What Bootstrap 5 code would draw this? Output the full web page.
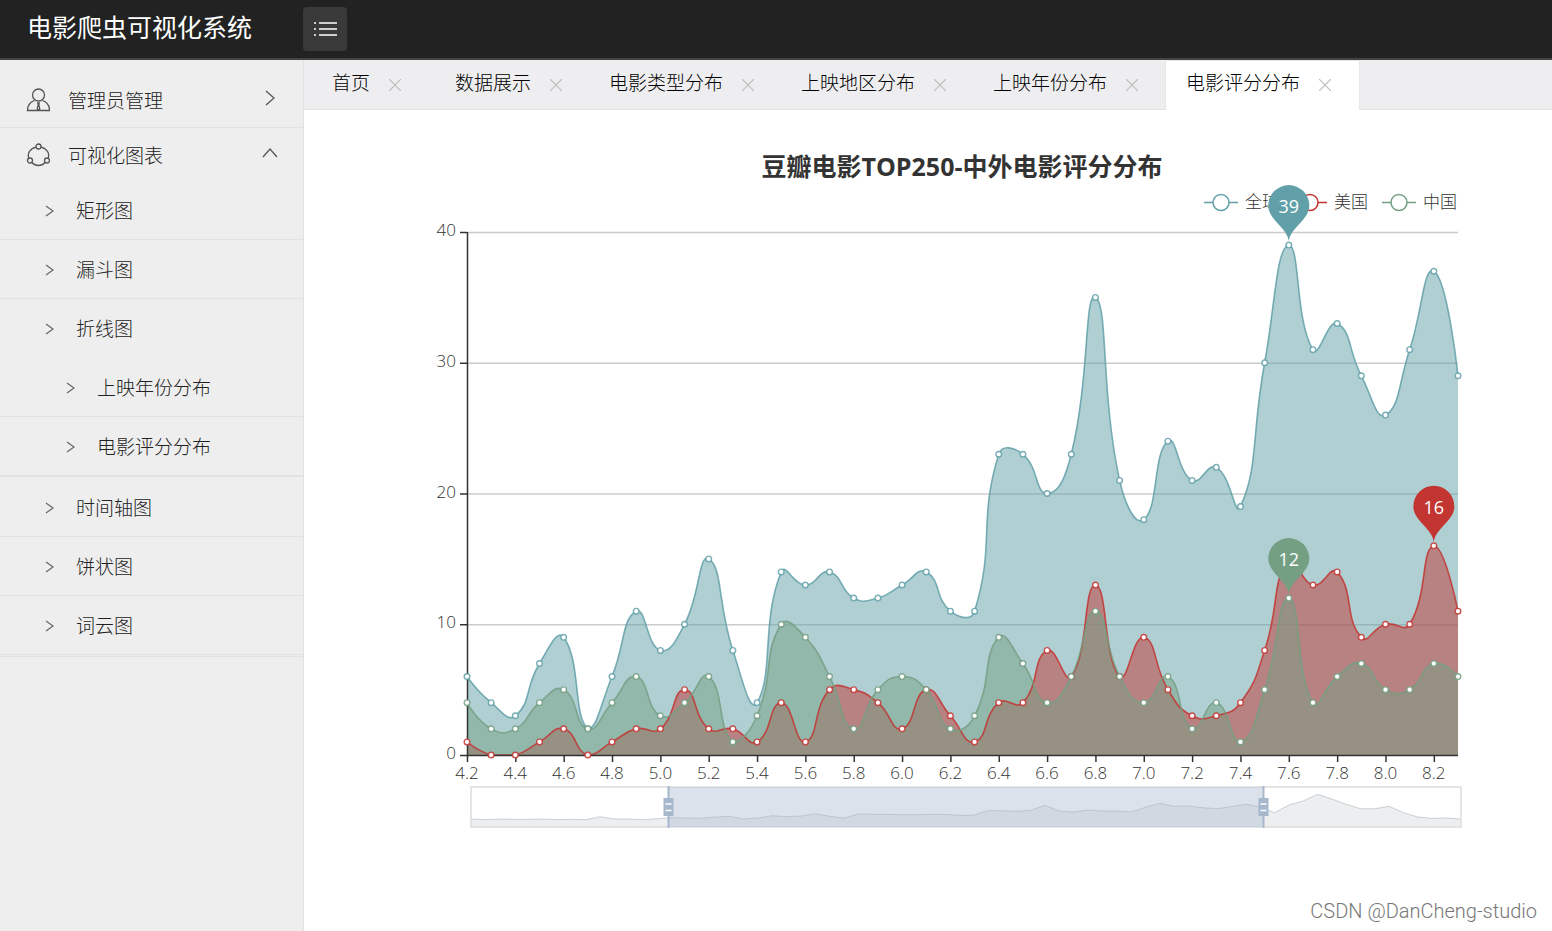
<!DOCTYPE html>
<html lang="zh-CN">
<head>
<meta charset="utf-8">
<meta name="viewport" content="width=device-width, initial-scale=1">
<title>电影爬虫可视化系统</title>
<link rel="stylesheet" href="https://cdn.jsdelivr.net/npm/bootstrap@5.3.0/dist/css/bootstrap.min.css">
<style>
  body { font-family: "Open Sans", "Noto Sans CJK SC", sans-serif; font-size: 19px; line-height: 28px; color: #222; background: #fff; }
  a { color: inherit; text-decoration: none; }
  .topbar { height: 60px; background: #222; border-bottom: 2px solid #444; padding-left: 27px; }
  .brand { width: 276px; font-size: 25px; font-weight: 400; color: #fff; padding-bottom: 5px; }
  .toggle { width: 44px; height: 44px; background: #393939; border-radius: 4px; border: 0; }
  .side { width: 304px; background: #eee; border-right: 1px solid #e2e2e2; font-weight: 300; }
  .menu { padding: 13px 0 1px; border-bottom: 1px solid #e2e2e2; }
  .group-head { height: 53px; padding: 0 25px 0 26px; }
  .menu > li:first-child > .group-head { height: 55px; padding-right: 27px; border-bottom: 1px solid #e2e2e2; }
  .group-name { margin-left: 18px; padding-top: 2px; }
  .item { height: 59px; padding-left: 44px; border-bottom: 1px solid #e2e2e2; }
  .item span { margin-left: 21px; padding-top: 1px; }
  .item svg { margin-top: 1px; }
  .item.parent { border-bottom: 0; }
  .submenu { border-bottom: 1px solid #e2e2e2; margin-bottom: 1px; }
  .submenu .item { padding-left: 65px; }
  .tabs { height: 50px; background: #eeeef0; border-bottom: 1px solid #e2e2e2; font-weight: 300; color: #000; }
  .tab-item { height: 50px; padding: 0 27px 4px 20px; gap: 19px; }
  .tab-item.home { padding-left: 28px; padding-right: 34px; }
  .tab-item.active { background: #fff; border: 1px solid #e6e6e6; border-bottom-color: #fff; border-radius: 2px; padding: 0 28px 4px 20px; }
  .tab-x { width: 12px; height: 12px; margin-top: 4px; }
  .chart-text { font-size: 17px; fill: #333; font-weight: 300; }
  .axis-text { font-size: 17px; fill: #333; font-weight: 300; }
  .chart-title { font-size: 25px; font-weight: 700; fill: #333; }
  .pin-text { font-size: 18px; fill: #fff; text-anchor: middle; }
  .watermark { right: 15px; bottom: 6px; font-family: Roboto, "Liberation Sans", sans-serif; font-weight: 300; font-size: 20px; color: #777; }
</style>
</head>
<body class="d-flex flex-column min-vh-100">
<header class="topbar d-flex align-items-center">
  <a href="#" class="brand">电影爬虫可视化系统</a>
  <button type="button" class="toggle d-flex align-items-center justify-content-center p-0" aria-label="菜单">
    <svg width="24" height="16" viewBox="0 0 24 16" stroke="#fff" stroke-width="1.6"><path d="M1 2h2M6 2h18M1 8h2M6 8h18M1 14h2M6 14h18"/></svg>
  </button>
</header>
<div class="d-flex flex-grow-1">
  <aside class="side flex-shrink-0">
    <ul class="menu list-unstyled m-0">
      <li><a href="#" class="group-head d-flex align-items-center">
        <svg width="24" height="24" viewBox="0 0 24 24" fill="none" stroke="#555" stroke-width="1.3"><circle cx="12.500" cy="7" r="6"/><path d="M8.500 12.500C4 14 1.500 17.500 1.500 22.500H23.500C23.500 17.500 21 14 16.500 12.500M11.800 15h1.400l-.4 2 1 4-1.300 1-1.300-1 1-4z"/></svg>
        <span class="group-name flex-grow-1">管理员管理</span>
        <svg width="12" height="18" viewBox="0 0 12 18" fill="none" stroke="#555" stroke-width="1.3" class="mb-1"><path d="M2 2l8 7-8 7"/></svg></a></li>
      <li><a href="#" class="group-head d-flex align-items-center">
        <svg width="24" height="24" viewBox="0 0 24 24" fill="none" stroke="#555" stroke-width="1.3"><circle cx="12.500" cy="3.500" r="2.500"/><circle cx="4" cy="17.500" r="2.500"/><circle cx="21" cy="17.500" r="2.500"/><path d="M10 4C4.500 5.500 1 10 2.800 15M15 4c5.500 1.500 9 6 7.200 11M6 19.500c3.500 4 9.500 4 13 0"/></svg>
        <span class="group-name flex-grow-1">可视化图表</span>
        <svg width="16" height="12" viewBox="0 0 16 12" fill="none" stroke="#555" stroke-width="1.3" class="mb-1"><path d="M1 10l7-8 7 8"/></svg></a>
        <ul class="list-unstyled m-0">
          <li><a href="#" class="item d-flex align-items-center"><svg width="11" height="14" viewBox="0 0 11 14" fill="none" stroke="#666" stroke-width="1.2"><path d="M2 2l7 5-7 5"/></svg><span>矩形图</span></a></li>
          <li><a href="#" class="item d-flex align-items-center"><svg width="11" height="14" viewBox="0 0 11 14" fill="none" stroke="#666" stroke-width="1.2"><path d="M2 2l7 5-7 5"/></svg><span>漏斗图</span></a></li>
          <li><a href="#" class="item parent d-flex align-items-center"><svg width="11" height="14" viewBox="0 0 11 14" fill="none" stroke="#666" stroke-width="1.2"><path d="M2 2l7 5-7 5"/></svg><span>折线图</span></a>
            <ul class="submenu list-unstyled">
              <li><a href="#" class="item d-flex align-items-center"><svg width="11" height="14" viewBox="0 0 11 14" fill="none" stroke="#666" stroke-width="1.2"><path d="M2 2l7 5-7 5"/></svg><span>上映年份分布</span></a></li>
              <li><a href="#" class="item d-flex align-items-center"><svg width="11" height="14" viewBox="0 0 11 14" fill="none" stroke="#666" stroke-width="1.2"><path d="M2 2l7 5-7 5"/></svg><span>电影评分分布</span></a></li>
            </ul></li>
          <li><a href="#" class="item d-flex align-items-center"><svg width="11" height="14" viewBox="0 0 11 14" fill="none" stroke="#666" stroke-width="1.2"><path d="M2 2l7 5-7 5"/></svg><span>时间轴图</span></a></li>
          <li><a href="#" class="item d-flex align-items-center"><svg width="11" height="14" viewBox="0 0 11 14" fill="none" stroke="#666" stroke-width="1.2"><path d="M2 2l7 5-7 5"/></svg><span>饼状图</span></a></li>
          <li><a href="#" class="item d-flex align-items-center"><svg width="11" height="14" viewBox="0 0 11 14" fill="none" stroke="#666" stroke-width="1.2"><path d="M2 2l7 5-7 5"/></svg><span>词云图</span></a></li>
        </ul></li>
    </ul>
  </aside>
  <main class="flex-grow-1 overflow-hidden">
    <nav class="tabs d-flex text-nowrap">
      <a href="#" class="tab-item home d-flex align-items-center">首页<svg class="tab-x" viewBox="0 0 12 12" stroke="#bbb" stroke-width="1.2"><path d="M0 0l12 12M12 0L0 12"/></svg></a>
      <a href="#" class="tab-item d-flex align-items-center">数据展示<svg class="tab-x" viewBox="0 0 12 12" stroke="#bbb" stroke-width="1.2"><path d="M0 0l12 12M12 0L0 12"/></svg></a>
      <a href="#" class="tab-item d-flex align-items-center">电影类型分布<svg class="tab-x" viewBox="0 0 12 12" stroke="#bbb" stroke-width="1.2"><path d="M0 0l12 12M12 0L0 12"/></svg></a>
      <a href="#" class="tab-item d-flex align-items-center">上映地区分布<svg class="tab-x" viewBox="0 0 12 12" stroke="#bbb" stroke-width="1.2"><path d="M0 0l12 12M12 0L0 12"/></svg></a>
      <a href="#" class="tab-item d-flex align-items-center">上映年份分布<svg class="tab-x" viewBox="0 0 12 12" stroke="#bbb" stroke-width="1.2"><path d="M0 0l12 12M12 0L0 12"/></svg></a>
      <a href="#" class="tab-item active d-flex align-items-center" aria-current="page">电影评分分布<svg class="tab-x" viewBox="0 0 12 12" stroke="#bbb" stroke-width="1.2"><path d="M0 0l12 12M12 0L0 12"/></svg></a>
    </nav>
    <svg id="chart" class="d-block w-100" viewBox="0 0 1248 740" role="img" aria-label="豆瓣电影TOP250-中外电影评分分布"></svg>
  </main>
</div>
<div class="watermark position-absolute">CSDN @DanCheng-studio</div>
<script src="https://cdn.jsdelivr.net/npm/bootstrap@5.3.0/dist/js/bootstrap.bundle.min.js"></script>
<script>
const series = [
  { name: '全球', color: '#61a0a8', data: [6,4,3,7,9,2,6,11,8,10,15,8,4,14,13,14,12,12,13,14,11,11,23,23,20,23,35,21,18,24,21,22,19,30,39,31,33,29,26,31,37,29] },
  { name: '美国', color: '#c23531', data: [1,0,0,1,2,0,1,2,2,5,2,2,1,4,1,5,5,4,2,5,3,1,4,4,8,6,13,6,9,5,3,3,4,8,15,13,14,9,10,10,16,11] },
  { name: '中国', color: '#749f83', data: [4,2,2,4,5,2,4,6,3,4,6,1,3,10,9,6,2,5,6,5,2,3,9,7,4,6,11,6,4,6,2,4,1,5,12,4,6,7,5,5,7,6] }
];
// Plot area in chart coordinates
const left = 163, right = 1154, top0 = 122, base = 645, max = 40;
const count = series[0].data.length;
const px = i => left + i * (right - left) / (count - 1);
const py = v => base - v * (base - top0) / max;
const f = n => n.toFixed(2);

// Smooth curve through all points, handles kept inside the data's range
function smooth(pts) {
  const ys = pts.map(p => p[1]), lo = Math.min(...ys), hi = Math.max(...ys);
  const clamp = p => [Math.min(right, Math.max(left, p[0])), Math.min(hi, Math.max(lo, p[1]))];
  let d = 'M' + f(pts[0][0]) + ' ' + f(pts[0][1]), out = pts[0];
  for (let i = 1; i < pts.length; i++) {
    const p = pts[i], a = pts[i - 1], b = pts[i + 1];
    let cin = p, next = p;
    if (b) {
      const la = Math.hypot(p[0] - a[0], p[1] - a[1]), lb = Math.hypot(p[0] - b[0], p[1] - b[1]);
      const r = lb / (la + lb), vx = b[0] - a[0], vy = b[1] - a[1];
      cin = [p[0] - vx * .5 * (1 - r), p[1] - vy * .5 * (1 - r)];
      next = [p[0] + vx * .5 * r, p[1] + vy * .5 * r];
    }
    const c0 = clamp(out), c1 = clamp(cin);
    d += 'C' + [...c0, ...c1, ...p].map(f).join(' ');
    out = next;
  }
  return d;
}
function pin(x, y, color, label) {
  return `<g transform="translate(${f(x)} ${f(y)})"><path d="M0 -4C-2 -18 -20.500 -25 -20.500 -39.500A20.500 20.500 0 0 1 20.500 -39.500C20.500 -25 2 -18 0 -4Z" fill="${color}"/><text class="pin-text" y="-32">${label}</text></g>`;
}
let s = `<text class="chart-title" x="658" y="66" text-anchor="middle">豆瓣电影TOP250-中外电影评分分布</text>`;
// Legend
series.forEach((q, i) => {
  const x = 900 + i * 89;
  s += `<path d="M${x} 92.500h34" stroke="${q.color}" stroke-width="1.500"/><circle cx="${x + 17}" cy="92.500" r="8" fill="#fff" stroke="${q.color}" stroke-width="1.500"/><text class="chart-text" x="${x + 41}" y="98">${q.name}</text>`;
});
// Grid and y axis
for (let v = 0; v <= max; v += 10) {
  if (v) s += `<path d="M${left} ${f(py(v) + .5)}H${right}" stroke="#ccc" stroke-width="1.500"/>`;
  s += `<path d="M156 ${f(py(v) + .5)}h7" stroke="#333" stroke-width="1.500"/><text class="axis-text" x="152" y="${f(py(v) + 4)}" text-anchor="end">${v}</text>`;
}
const curves = series.map(q => smooth(q.data.map((v, i) => [px(i), py(v)])));
series.forEach((q, k) => { s += `<path d="${curves[k]}V${base}H${left}Z" fill="${q.color}" fill-opacity=".5"/>`; });
series.forEach((q, k) => { s += `<path d="${curves[k]}" fill="none" stroke="${q.color}" stroke-opacity=".85" stroke-width="1.600"/>`; });
s += `<path d="M${left + .5} ${top0}V${base + .5}H${right}" fill="none" stroke="#333" stroke-width="1.500"/>`;
for (let i = 0; i < count; i += 2) {
  s += `<path d="M${f(px(i) + .5)} ${base}v7" stroke="#333" stroke-width="1.500"/><text class="axis-text" x="${f(px(i))}" y="669" text-anchor="middle">${(4.2 + i / 10).toFixed(1)}</text>`;
}
series.forEach(q => q.data.forEach((v, i) => {
  s += `<circle cx="${f(px(i))}" cy="${f(py(v))}" r="2.800" fill="#fff" stroke="${q.color}" stroke-opacity=".85" stroke-width="1.400"/>`;
}));
series.forEach(q => {
  const m = Math.max(...q.data), i = q.data.indexOf(m);
  s += pin(px(i), py(m), q.color, m);
});
// Range slider: overview curve, selected window and its two handles
const over = [8,7.3,8,7.7,7.7,8,7.3,7.7,7.3,10.3,8,8,7.3,8.3,9.3,9,8.7,10,10.7,8,9,11.3,10.3,11,13.3,10.7,9,13,12.7,12.7,12.3,12.3,12.7,12.7,11.7,11.7,16.3,16.3,15.7,16.7,21.7,16,15,17,16,16,15,19.7,23.7,20.7,21,19.3,18.3,20.3,22.7,20,14.3,22,26,32.7,28,22.7,18.3,18.3,20.7,14.3,10,8.7,9,8];
const x0 = 167, x1 = 1157, y0 = 677, y1 = 717;
const op = over.map((h, i) => f(x0 + i * (x1 - x0) / (over.length - 1)) + ' ' + f(y1 - h)).join('L');
s += `<path d="M${x0} ${y1}L${op}V${y1}Z" fill="#2f4554" fill-opacity=".09"/><path d="M${op}" fill="none" stroke="#2f4554" stroke-opacity=".22"/>`;
s += `<rect x="${x0}" y="${y0}" width="${x1 - x0}" height="${y1 - y0}" fill="none" stroke="#ddd" stroke-width="1.500"/>`;
s += `<rect x="364" y="${y0}" width="595" height="${y1 - y0}" fill="#a7b7cc" fill-opacity=".4"/>`;
[364, 959].forEach(x => {
  s += `<path d="M${x + .5} ${y0 - 1}v${y1 - y0 + 2}" stroke="#a7b7cc" stroke-width="2"/><rect x="${x - 4.5}" y="688" width="10" height="18" fill="#a7b7cc"/><path d="M${x - 2.5} 694h6M${x - 2.5} 700.500h6" stroke="#fff" stroke-width="1.500"/>`;
});
document.getElementById('chart').innerHTML = s;
</script>
</body>
</html>
